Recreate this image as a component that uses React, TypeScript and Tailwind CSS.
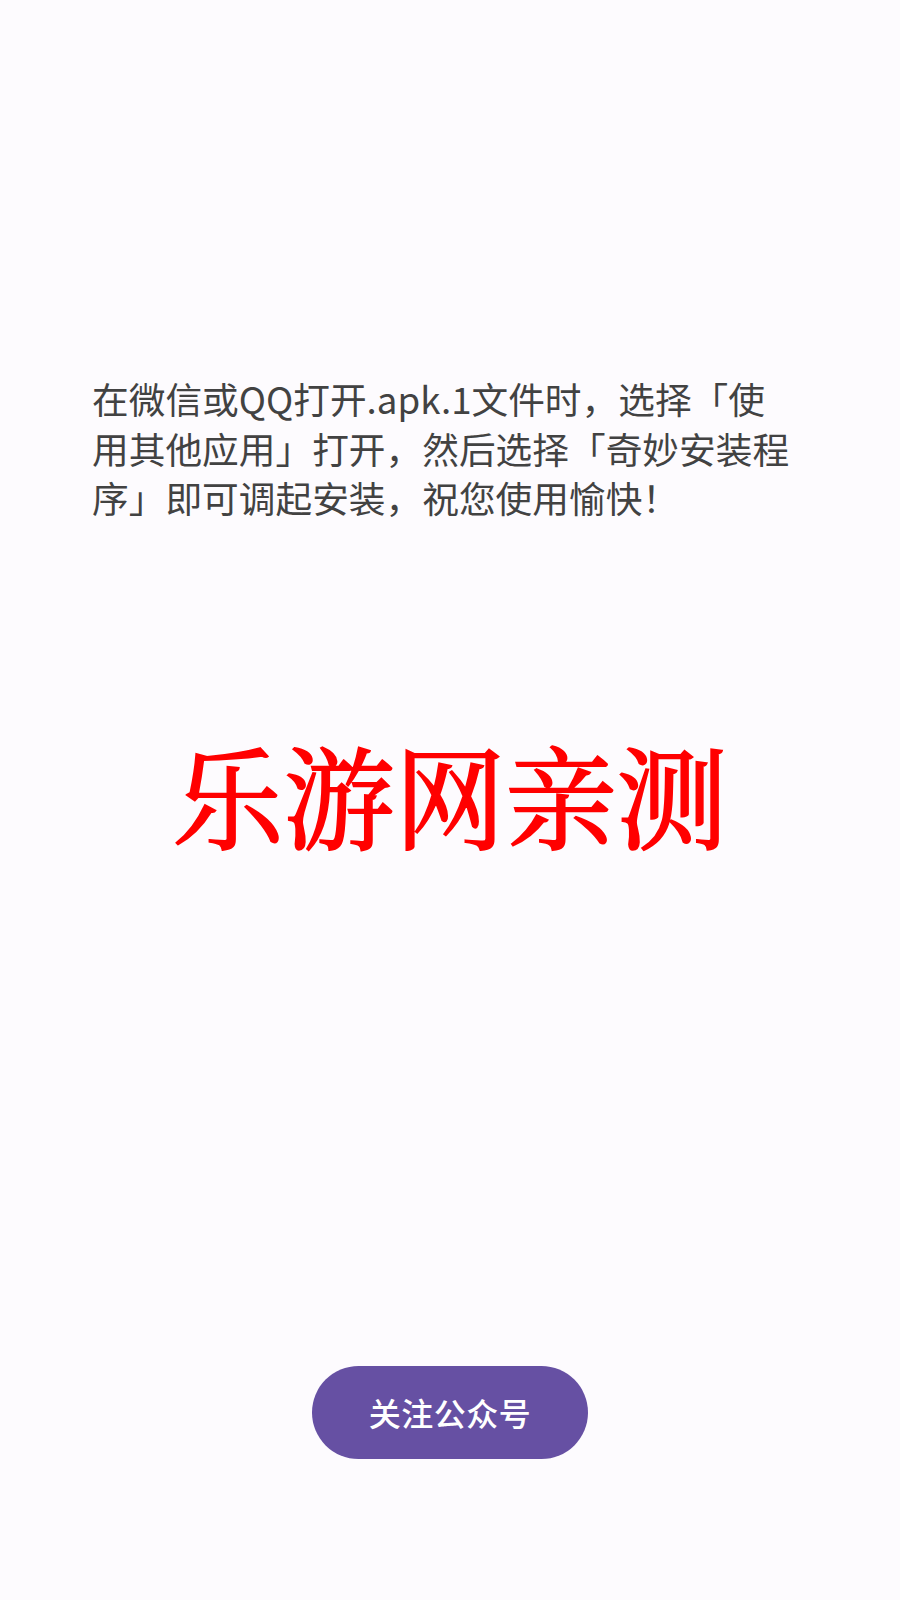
import React from "react";

export default function App() {
  return (
    <div className="w-[900px] h-[1600px] bg-[#fdfbfe] flex flex-col overflow-hidden">
      <div className="pt-[374px] pl-[92px] pr-[60px] text-[36.7px] leading-[49.5px] text-[#424242] whitespace-nowrap font-['Noto_Sans_CJK_SC','Noto_Sans',sans-serif]">
        <div>在微信或QQ打开.apk.1文件时，选择「使</div>
        <div>用其他应用」打开，然后选择「奇妙安装程</div>
        <div>序」即可调起安装，祝您使用愉快！</div>
      </div>
      <div className="mt-[215px] text-center text-[111px] leading-[111px] font-normal text-[#ff0000] [-webkit-text-stroke:2px_#ff0000] font-['Noto_Serif_CJK_SC','Songti_SC',SimSun,serif]">
        乐游网亲测
      </div>
      <div className="mt-[517px] flex justify-center">
        <button className="w-[276px] h-[93px] rounded-full bg-[#6650a3] text-white text-[32px] font-medium tracking-[0.5px] font-['Noto_Sans_CJK_SC','Noto_Sans',sans-serif]">
          关注公众号
        </button>
      </div>
    </div>
  );
}
